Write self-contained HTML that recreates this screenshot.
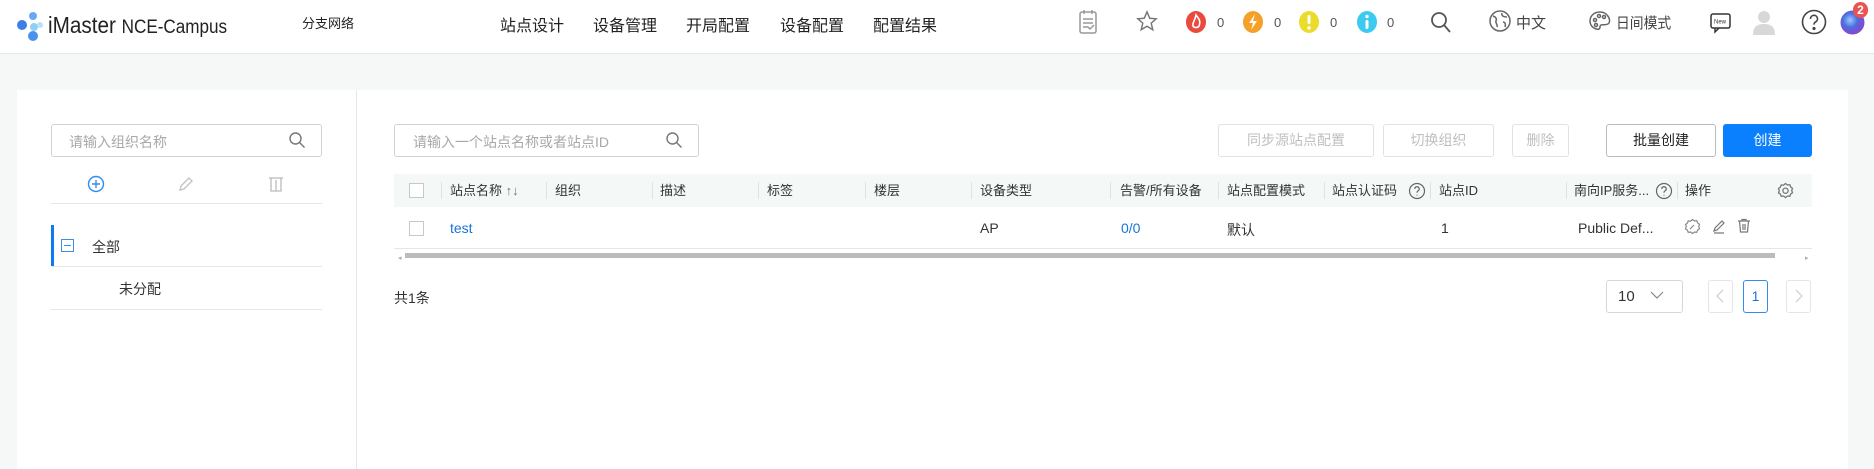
<!DOCTYPE html>
<html><head><meta charset="utf-8">
<style>
*{box-sizing:border-box;margin:0;padding:0}
body{width:1874px;height:469px;overflow:hidden;background:#f5f8f6;font-family:"Liberation Sans","Noto Sans CJK SC",sans-serif;color:#333;position:relative}
.a{position:absolute}
.hdr{left:0;top:0;width:1874px;height:54px;background:#fff;border-bottom:1px solid #e4e8e6}
.nav{top:12px;font-size:16px;color:#222}
.panel{left:17px;top:90px;width:1831px;height:379px;background:#fff}
.box{border:1px solid #cfd3d2;border-radius:3px;background:#fff}
.ph{color:#a8a8a8;font-size:14px}
.btn{top:124px;height:33px;border:1px solid #e0e3e2;border-radius:3px;font-size:14px;color:#bfbfbf;text-align:center;line-height:31px;background:#fff}
.th{top:174px;height:33px;font-size:13px;color:#333;line-height:33px}
.sep{top:182px;width:1px;height:17px;background:#dfe3e1}
.td{top:220px;font-size:14px;color:#333}
.cnt{font-size:13px;color:#555;top:15px}
</style></head><body>
<div class="a hdr"></div>
<svg class="a" style="left:16px;top:11px" width="28" height="30" viewBox="0 0 28 30">
<circle cx="17" cy="5" r="4" fill="#6aa8f3"/><circle cx="6" cy="14" r="5" fill="#3d7fe6"/><circle cx="18" cy="16" r="4" fill="#8fd0f6"/><circle cx="17" cy="25" r="5" fill="#4b92ef"/><circle cx="24" cy="14" r="3" fill="#b9e1fb"/></svg>
<div class="a" style="left:48px;top:12px;font-size:23px;color:#222;transform:scaleX(0.9);transform-origin:left">iMaster <span style="font-size:19px">NCE-Campus</span></div>
<div class="a" style="left:302px;top:13px;font-size:13px;color:#222">分支网络</div>
<div class="a nav" style="left:500px">站点设计</div>
<div class="a nav" style="left:593px">设备管理</div>
<div class="a nav" style="left:686px">开局配置</div>
<div class="a nav" style="left:780px">设备配置</div>
<div class="a nav" style="left:873px">配置结果</div>
<svg class="a" style="left:1078px;top:9px" width="20" height="26" viewBox="0 0 20 26" fill="none" stroke="#999" stroke-width="1.5"><rect x="2" y="3" width="16" height="21" rx="2"/><path d="M6 1v4M14 1v4M5 10h10M5 14h10M5 18h5l2 2 4-4"/></svg>
<svg class="a" style="left:1136px;top:10px" width="22" height="22" viewBox="0 0 24 24" fill="none" stroke="#777" stroke-width="1.6"><path d="M12 2l3 7 7 .6-5.4 4.7 1.7 7.2L12 17.7 5.7 21.5l1.7-7.2L2 9.6 9 9z"/></svg>
<svg class="a" style="left:1185px;top:10px" width="22" height="24"><ellipse cx="11" cy="12" rx="10" ry="11" fill="#ea4a3c"/><path d="M11 5c3 4 5 6 3 11-1 2-5 2-6 0-1-3 2-5 3-11z" fill="none" stroke="#fff" stroke-width="1.6"/></svg>
<div class="a cnt" style="left:1217px">0</div>
<svg class="a" style="left:1242px;top:10px" width="22" height="24"><ellipse cx="11" cy="12" rx="10" ry="11" fill="#f6a029"/><path d="M13 4l-6 9h4l-2 7 6-9h-4z" fill="#fff"/></svg>
<div class="a cnt" style="left:1274px">0</div>
<svg class="a" style="left:1298px;top:10px" width="22" height="24"><ellipse cx="11" cy="12" rx="10" ry="11" fill="#ebdc2b"/><rect x="9.5" y="5" width="3" height="9" rx="1.5" fill="#fff"/><circle cx="11" cy="18" r="1.7" fill="#fff"/></svg>
<div class="a cnt" style="left:1330px">0</div>
<svg class="a" style="left:1356px;top:10px" width="22" height="24"><ellipse cx="11" cy="12" rx="10" ry="11" fill="#3ccbee"/><circle cx="11" cy="6.5" r="1.7" fill="#fff"/><rect x="9.5" y="10" width="3" height="9" rx="1.5" fill="#fff"/></svg>
<div class="a cnt" style="left:1387px">0</div>
<svg class="a" style="left:1430px;top:11px" width="22" height="24" fill="none" stroke="#555" stroke-width="1.8"><circle cx="9" cy="9" r="7"/><path d="M14 14l6 7"/></svg>
<svg class="a" style="left:1488px;top:9px" width="24" height="24" fill="none" stroke="#666" stroke-width="1.5"><circle cx="12" cy="12" r="10"/><path d="M5 7c3 1 4 3 3 5s2 3 1 6M14 4c-1 3 2 4 5 4M15 13c2 0 3 2 2 5" /></svg>
<div class="a" style="left:1516px;top:12px;font-size:15px;color:#444">中文</div>
<svg class="a" style="left:1588px;top:10px" width="24" height="22" fill="none" stroke="#666" stroke-width="1.5"><path d="M12 2C5 2 2 7 2 11c0 6 6 9 9 8 2-1 0-3 2-4s6 1 8-2c2-4-2-11-9-11z"/><circle cx="7" cy="10" r="1.5"/><circle cx="11" cy="6" r="1.5"/><circle cx="16" cy="7" r="1.5"/><circle cx="8" cy="15" r="1.5"/></svg>
<div class="a" style="left:1616px;top:12px;font-size:15px;color:#444;transform:scaleX(0.92);transform-origin:left">日间模式</div>
<svg class="a" style="left:1709px;top:11px" width="24" height="24" fill="none" stroke="#333" stroke-width="1.5"><rect x="2" y="3" width="19" height="14" rx="2"/><path d="M6 17v4l4-4"/><text x="5" y="12.5" font-size="6" fill="#333" stroke="none" font-family="Liberation Sans">New</text></svg>
<svg class="a" style="left:1752px;top:9px" width="24" height="26"><circle cx="12" cy="8" r="6" fill="#d8d8d8"/><path d="M1 26c0-9 5-11 11-11s11 2 11 11z" fill="#d8d8d8"/></svg>
<svg class="a" style="left:1801px;top:9px" width="26" height="26" fill="none" stroke="#444" stroke-width="1.6"><circle cx="13" cy="13" r="11.5"/><path d="M9.5 10a3.5 3.5 0 1 1 5 3c-1.2.6-1.5 1.2-1.5 2.6"/><circle cx="13" cy="19.5" r=".8" fill="#444"/></svg>
<svg class="a" style="left:1840px;top:10px" width="25" height="25"><defs><radialGradient id="g" cx="40%" cy="40%"><stop offset="0" stop-color="#9fc6ff"/><stop offset=".6" stop-color="#4a6fe0"/><stop offset="1" stop-color="#7a4fd0"/></radialGradient></defs><circle cx="12.5" cy="12.5" r="12" fill="url(#g)"/></svg>
<div class="a" style="left:1853px;top:2px;width:15px;height:16px;border-radius:8px;background:#e85353;color:#fff;font-size:12px;font-weight:bold;text-align:center;line-height:16px">2</div>

<div class="a panel"></div>
<div class="a" style="left:356px;top:90px;width:1px;height:379px;background:#e4e7e6"></div>
<div class="a box" style="left:51px;top:124px;width:271px;height:33px"></div>
<div class="a ph" style="left:69px;top:132px">请输入组织名称</div>
<svg class="a" style="left:288px;top:131px" width="18" height="18" fill="none" stroke="#777" stroke-width="1.4"><circle cx="7.5" cy="7.5" r="5.5"/><path d="M11.5 11.5l5 5"/></svg>
<svg class="a" style="left:87px;top:175px" width="18" height="18" fill="none" stroke="#2f8cf0" stroke-width="1.4"><circle cx="9" cy="9" r="7.5"/><path d="M9 5v8M5 9h8"/></svg>
<svg class="a" style="left:177px;top:175px" width="18" height="18" fill="none" stroke="#c4c4c4" stroke-width="1.4"><path d="M3 15l1-4 8-8 3 3-8 8z"/></svg>
<svg class="a" style="left:267px;top:175px" width="18" height="18" fill="none" stroke="#bbb" stroke-width="1.3"><path d="M2 3h14M4 3v13h10V3M9 5v11"/></svg>
<div class="a" style="left:51px;top:203px;width:271px;height:1px;background:#e4e7e6"></div>
<div class="a" style="left:51px;top:225px;width:3px;height:41px;background:#0a7af5"></div>
<div class="a" style="left:61px;top:239px;width:13px;height:13px;border:1px solid #3b8ee8"></div>
<div class="a" style="left:64px;top:245px;width:7px;height:1px;background:#3b8ee8"></div>
<div class="a" style="left:92px;top:237px;font-size:14px">全部</div>
<div class="a" style="left:51px;top:266px;width:271px;height:1px;background:#e4e7e6"></div>
<div class="a" style="left:119px;top:279px;font-size:14px">未分配</div>
<div class="a" style="left:51px;top:309px;width:271px;height:1px;background:#e4e7e6"></div>
<div class="a box" style="left:394px;top:124px;width:305px;height:33px"></div>
<div class="a ph" style="left:413px;top:132px">请输入一个站点名称或者站点ID</div>
<svg class="a" style="left:665px;top:131px" width="18" height="18" fill="none" stroke="#777" stroke-width="1.4"><circle cx="7.5" cy="7.5" r="5.5"/><path d="M11.5 11.5l5 5"/></svg>
<div class="a btn" style="left:1218px;width:156px">同步源站点配置</div>
<div class="a btn" style="left:1383px;width:111px">切换组织</div>
<div class="a btn" style="left:1512px;width:57px">删除</div>
<div class="a btn" style="left:1606px;width:110px;color:#222;border-color:#b8bcbb">批量创建</div>
<div class="a btn" style="left:1723px;width:89px;color:#fff;background:#0a80ff;border-color:#0a80ff">创建</div>

<div class="a" style="left:394px;top:174px;width:1418px;height:33px;background:#f4f8f6"></div>
<div class="a" style="left:409px;top:183px;width:15px;height:15px;border:1px solid #c8c8c8;background:#fff"></div>
<div class="a sep" style="left:441px"></div>
<div class="a th" style="left:450px">站点名称 <span style="color:#777">↑↓</span></div>
<div class="a sep" style="left:546px"></div><div class="a th" style="left:555px">组织</div>
<div class="a sep" style="left:652px"></div><div class="a th" style="left:660px">描述</div>
<div class="a sep" style="left:758px"></div><div class="a th" style="left:767px">标签</div>
<div class="a sep" style="left:865px"></div><div class="a th" style="left:874px">楼层</div>
<div class="a sep" style="left:971px"></div><div class="a th" style="left:980px">设备类型</div>
<div class="a sep" style="left:1110px"></div><div class="a th" style="left:1120px">告警/所有设备</div>
<div class="a sep" style="left:1218px"></div><div class="a th" style="left:1227px">站点配置模式</div>
<div class="a sep" style="left:1324px"></div><div class="a th" style="left:1332px">站点认证码</div>
<svg class="a" style="left:1408px;top:182px" width="18" height="18" fill="none" stroke="#666" stroke-width="1.2"><circle cx="9" cy="9" r="7.5"/><path d="M6.8 7a2.2 2.2 0 1 1 3 2c-.7.4-.8.8-.8 1.8M9 12.8v.8"/></svg>
<div class="a sep" style="left:1430px"></div><div class="a th" style="left:1439px">站点ID</div>
<div class="a sep" style="left:1566px"></div><div class="a th" style="left:1574px">南向IP服务...</div>
<svg class="a" style="left:1655px;top:182px" width="18" height="18" fill="none" stroke="#666" stroke-width="1.2"><circle cx="9" cy="9" r="7.5"/><path d="M6.8 7a2.2 2.2 0 1 1 3 2c-.7.4-.8.8-.8 1.8M9 12.8v.8"/></svg>
<div class="a sep" style="left:1677px"></div><div class="a th" style="left:1685px">操作</div>
<svg class="a" style="left:1777px;top:182px" width="17" height="17" fill="none" stroke="#777" stroke-width="1.3"><path d="M8.5 1.5l2 1.5 2.3-.3.8 2.2 1.9 1.4-.8 2.2.8 2.2-1.9 1.4-.8 2.2-2.3-.3-2 1.5-2-1.5-2.3.3-.8-2.2L1.5 10.9l.8-2.2-.8-2.2 1.9-1.4.8-2.2 2.3.3z"/><circle cx="8.5" cy="8.7" r="2.6"/></svg>

<div class="a" style="left:409px;top:221px;width:15px;height:15px;border:1px solid #c8c8c8"></div>
<div class="a td" style="left:450px;color:#1874d8">test</div>
<div class="a td" style="left:980px">AP</div>
<div class="a td" style="left:1121px;color:#1874d8">0/0</div>
<div class="a td" style="left:1227px">默认</div>
<div class="a td" style="left:1441px">1</div>
<div class="a td" style="left:1578px">Public Def...</div>
<svg class="a" style="left:1684px;top:218px" width="17" height="17" fill="none" stroke="#888" stroke-width="1.2"><path d="M8.5 1.5l2 1.5 2.3-.3.8 2.2 1.9 1.4-.8 2.2.8 2.2-1.9 1.4-.8 2.2-2.3-.3-2 1.5-2-1.5-2.3.3-.8-2.2L1.5 10.9l.8-2.2-.8-2.2 1.9-1.4.8-2.2 2.3.3z"/><path d="M6 11l4-4"/></svg>
<svg class="a" style="left:1711px;top:218px" width="16" height="16" fill="none" stroke="#777" stroke-width="1.2"><path d="M3 13l1-3 7-7 2 2-7 7zM3 15h10"/></svg>
<svg class="a" style="left:1736px;top:218px" width="16" height="16" fill="none" stroke="#777" stroke-width="1.2"><path d="M2 3h12M6 3V1.5h4V3M3.5 3l1 11h7l1-11M7 6v6M9 6v6"/></svg>
<div class="a" style="left:394px;top:248px;width:1418px;height:1px;background:#e4e7e6"></div>
<div class="a" style="left:398px;top:254px;font-size:7px;color:#aaa">◂</div>
<div class="a" style="left:405px;top:253px;width:1370px;height:5px;background:#bcbcbc"></div>
<div class="a" style="left:1805px;top:254px;font-size:7px;color:#aaa">▸</div>

<div class="a" style="left:394px;top:288px;font-size:14px;color:#333">共1条</div>
<div class="a box" style="left:1606px;top:280px;width:77px;height:33px;border-color:#d5d8d7"></div>
<div class="a" style="left:1618px;top:288px;font-size:15px">10</div>
<svg class="a" style="left:1650px;top:290px" width="14" height="10" fill="none" stroke="#888" stroke-width="1.2"><path d="M1 2l6 6 6-6"/></svg>
<div class="a box" style="left:1708px;top:280px;width:25px;height:33px;border-color:#e3e6e5"></div>
<svg class="a" style="left:1716px;top:289px" width="8" height="14" fill="none" stroke="#ccc" stroke-width="1.2"><path d="M7 1L1 7l6 6"/></svg>
<div class="a box" style="left:1743px;top:280px;width:25px;height:33px;border-color:#2f8cf0;color:#1874d8;font-size:14px;text-align:center;line-height:31px">1</div>
<div class="a box" style="left:1786px;top:280px;width:25px;height:33px;border-color:#e3e6e5"></div>
<svg class="a" style="left:1795px;top:289px" width="8" height="14" fill="none" stroke="#ccc" stroke-width="1.2"><path d="M1 1l6 6-6 6"/></svg>
</body></html>
